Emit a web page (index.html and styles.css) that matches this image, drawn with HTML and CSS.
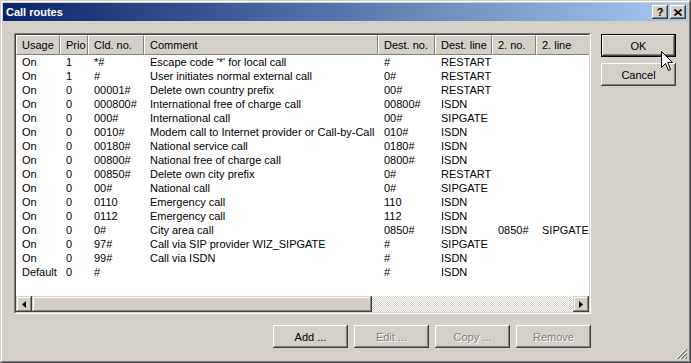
FILE: index.html
```html
<!DOCTYPE html>
<html lang="en">
<head>
    <meta charset="UTF-8">
    <title>Call routes</title>
    <link rel="stylesheet" href="styles.css">
</head>
<body>
    <div class="window">
        <div class="frame">
            <div class="titlebar">
                <span class="title">Call routes</span>
                <span class="cap-btn help">?</span>
                <span class="cap-btn close">
                    <svg width="8" height="7" viewBox="0 0 8 7"><path d="M0.5 0.5 L7.5 6.5 M7.5 0.5 L0.5 6.5" stroke="#000" stroke-width="1.6"/></svg>
                </span>
            </div>

            <div class="client">
                <div class="main">
                    <div class="list">
                        <div class="list-in">
                            <div class="cols head">
                                <div class="hcell">Usage</div>
                                <div class="hcell">Prio</div>
                                <div class="hcell">Cld. no.</div>
                                <div class="hcell">Comment</div>
                                <div class="hcell">Dest. no.</div>
                                <div class="hcell">Dest. line</div>
                                <div class="hcell">2. no.</div>
                                <div class="hcell">2. line</div>
                            </div>
                            <div class="rows" id="rows"></div>
                            <div class="hscroll">
                                <div class="sb-btn"><svg width="4" height="7" viewBox="0 0 4 7"><path d="M4 0 L0 3.5 L4 7 Z" fill="#000"/></svg></div>
                                <div class="thumb"></div>
                                <div class="track"></div>
                                <div class="sb-btn"><svg width="4" height="7" viewBox="0 0 4 7"><path d="M0 0 L4 3.5 L0 7 Z" fill="#000"/></svg></div>
                            </div>
                        </div>
                    </div>
                    <div class="actions">
                        <button class="btn">Add ...</button>
                        <button class="btn" disabled>Edit ...</button>
                        <button class="btn" disabled>Copy ...</button>
                        <button class="btn" disabled>Remove</button>
                    </div>
                </div>
                <div class="side">
                    <button class="btn default">OK</button>
                    <button class="btn">Cancel</button>
                </div>
            </div>
        </div>

        <svg class="grip" width="12" height="12" viewBox="0 0 12 12">
            <path d="M11 1 L1 11 M11 5 L5 11 M11 9 L9 11" stroke="#808080" stroke-width="1"/>
            <path d="M11 2 L2 11 M11 6 L6 11 M11 10 L10 11" stroke="#808080" stroke-width="1"/>
            <path d="M10 1 L0 11 M10 5 L4 11 M10 9 L8 11" stroke="#fff" stroke-width="1"/>
        </svg>

        <svg class="cursor" width="13" height="21" viewBox="0 0 13 21">
            <path d="M0.5 0.5 L0.5 16.5 L4.5 12.5 L7.5 19.5 L9.5 18.5 L6.8 11.5 L11.5 11.5 Z" fill="#fff" stroke="#000" stroke-width="1"/>
        </svg>
    </div>

    <script>
        // usage, prio, called no, comment, dest no, dest line, 2. no, 2. line
        const routes = [
            ["On", "1", "*#", "Escape code '*' for local call", "#", "RESTART"],
            ["On", "1", "#", "User initiates normal external call", "0#", "RESTART"],
            ["On", "0", "00001#", "Delete own country prefix", "00#", "RESTART"],
            ["On", "0", "000800#", "International free of charge call", "00800#", "ISDN"],
            ["On", "0", "000#", "International call", "00#", "SIPGATE"],
            ["On", "0", "0010#", "Modem call to Internet provider or Call-by-Call", "010#", "ISDN"],
            ["On", "0", "00180#", "National service call", "0180#", "ISDN"],
            ["On", "0", "00800#", "National free of charge call", "0800#", "ISDN"],
            ["On", "0", "00850#", "Delete own city prefix", "0#", "RESTART"],
            ["On", "0", "00#", "National call", "0#", "SIPGATE"],
            ["On", "0", "0110", "Emergency call", "110", "ISDN"],
            ["On", "0", "0112", "Emergency call", "112", "ISDN"],
            ["On", "0", "0#", "City area call", "0850#", "ISDN", "0850#", "SIPGATE"],
            ["On", "0", "97#", "Call via SIP provider WIZ_SIPGATE", "#", "SIPGATE"],
            ["On", "0", "99#", "Call via ISDN", "#", "ISDN"],
            ["Default", "0", "#", "", "#", "ISDN"]
        ];

        const rowsEle = document.getElementById("rows");
        routes.forEach(r => {
            const row = document.createElement("div");
            row.className = "cols row";
            for (let i = 0; i < 8; i++) {
                const cell = document.createElement("div");
                cell.className = "cell";
                cell.textContent = r[i] || "";
                row.appendChild(cell);
            }
            rowsEle.appendChild(row);
        });
    </script>
</body>
</html>
```

FILE: styles.css
```css
/* Reset */
* {
    margin: 0;
    padding: 0;
    box-sizing: border-box;
}

body {
    background-color: #d4d0c8;
    font-family: "Liberation Sans", Arial, sans-serif;
    font-size: 11px;
    color: #000;
}

/* Window frame */
.window {
    position: relative;
    width: 691px;
    height: 363px;
    border: 1px solid;
    border-color: #d4d0c8 #404040 #404040 #d4d0c8;
}

.frame {
    height: 100%;
    border: 1px solid;
    border-color: #fff #808080 #808080 #fff;
    padding: 1px;
    display: flex;
    flex-direction: column;
}

/* Title bar */
.titlebar {
    height: 18px;
    display: flex;
    align-items: center;
    gap: 2px;
    padding: 0 2px 0 3px;
    background: linear-gradient(to right, #0a246a, #a6caf0);
}

.title {
    flex: 1;
    color: #fff;
    font-weight: bold;
    font-size: 11px;
}

.cap-btn {
    width: 16px;
    height: 14px;
    background: #d4d0c8;
    box-shadow: inset -1px -1px #404040, inset 1px 1px #fff, inset -2px -2px #808080;
    display: flex;
    align-items: center;
    justify-content: center;
    font-weight: bold;
    font-size: 11px;
    line-height: 14px;
}

.help {
    margin-right: 0;
}

/* Client area */
.client {
    flex: 1;
    display: flex;
    gap: 10px;
    padding: 12px 0 0 11px;
}

.main {
    width: 577px;
    display: flex;
    flex-direction: column;
}

/* List view */
.list {
    height: 281px;
    border: 1px solid;
    border-color: #808080 #fff #fff #808080;
}

.list-in {
    height: 100%;
    border: 1px solid;
    border-color: #404040 #d4d0c8 #d4d0c8 #404040;
    background: #fff;
    display: flex;
    flex-direction: column;
    overflow: hidden;
}

.cols {
    display: grid;
    grid-template-columns: 44px 28px 56px 234px 57px 57px 44px 1fr;
}

.head {
    height: 20px;
    background: #d4d0c8;
}

.hcell {
    border-left: 1px solid #fff;
    border-top: 1px solid #fff;
    border-right: 1px solid #808080;
    border-bottom: 1px solid #808080;
    padding-left: 5px;
    line-height: 18px;
    white-space: nowrap;
    overflow: hidden;
}

.head .hcell:last-child {
    border-right: none;
}

.rows {
    flex: 1;
}

.row {
    height: 14px;
    line-height: 14px;
}

.cell {
    padding-left: 6px;
    white-space: nowrap;
    overflow: hidden;
}

/* Horizontal scroll bar */
.hscroll {
    height: 16px;
    display: flex;
}

.sb-btn,
.thumb {
    background: #d4d0c8;
    box-shadow: inset -1px -1px #404040, inset 1px 1px #d4d0c8, inset -2px -2px #808080, inset 2px 2px #fff;
}

.sb-btn {
    width: 16px;
    display: flex;
    align-items: center;
    justify-content: center;
}

.thumb {
    width: 340px;
}

.track {
    flex: 1;
    background: repeating-conic-gradient(#d4d0c8 0 25%, #fff 0 50%) 0 0 / 2px 2px;
}

/* Buttons */
.btn {
    width: 75px;
    height: 23px;
    background: #d4d0c8;
    border: none;
    font-family: "Liberation Sans", Arial, sans-serif;
    font-size: 11px;
    color: #000;
    box-shadow: inset -1px -1px #404040, inset 1px 1px #fff, inset -2px -2px #808080, inset 2px 2px #d4d0c8;
}

.btn:disabled {
    color: #808080;
    text-shadow: 1px 1px 0 #fff;
}

.btn.default {
    border: 1px solid #000;
    box-shadow: inset -1px -1px #404040, inset 1px 1px #fff, inset -2px -2px #808080;
}

.actions {
    display: flex;
    justify-content: flex-end;
    gap: 6px;
    margin-top: 11px;
}

.side {
    display: flex;
    flex-direction: column;
    gap: 6px;
    margin-top: 1px;
}

/* Overlays */
.grip {
    position: absolute;
    right: 2px;
    bottom: 2px;
}

.cursor {
    position: absolute;
    left: 660px;
    top: 50px;
}
```
